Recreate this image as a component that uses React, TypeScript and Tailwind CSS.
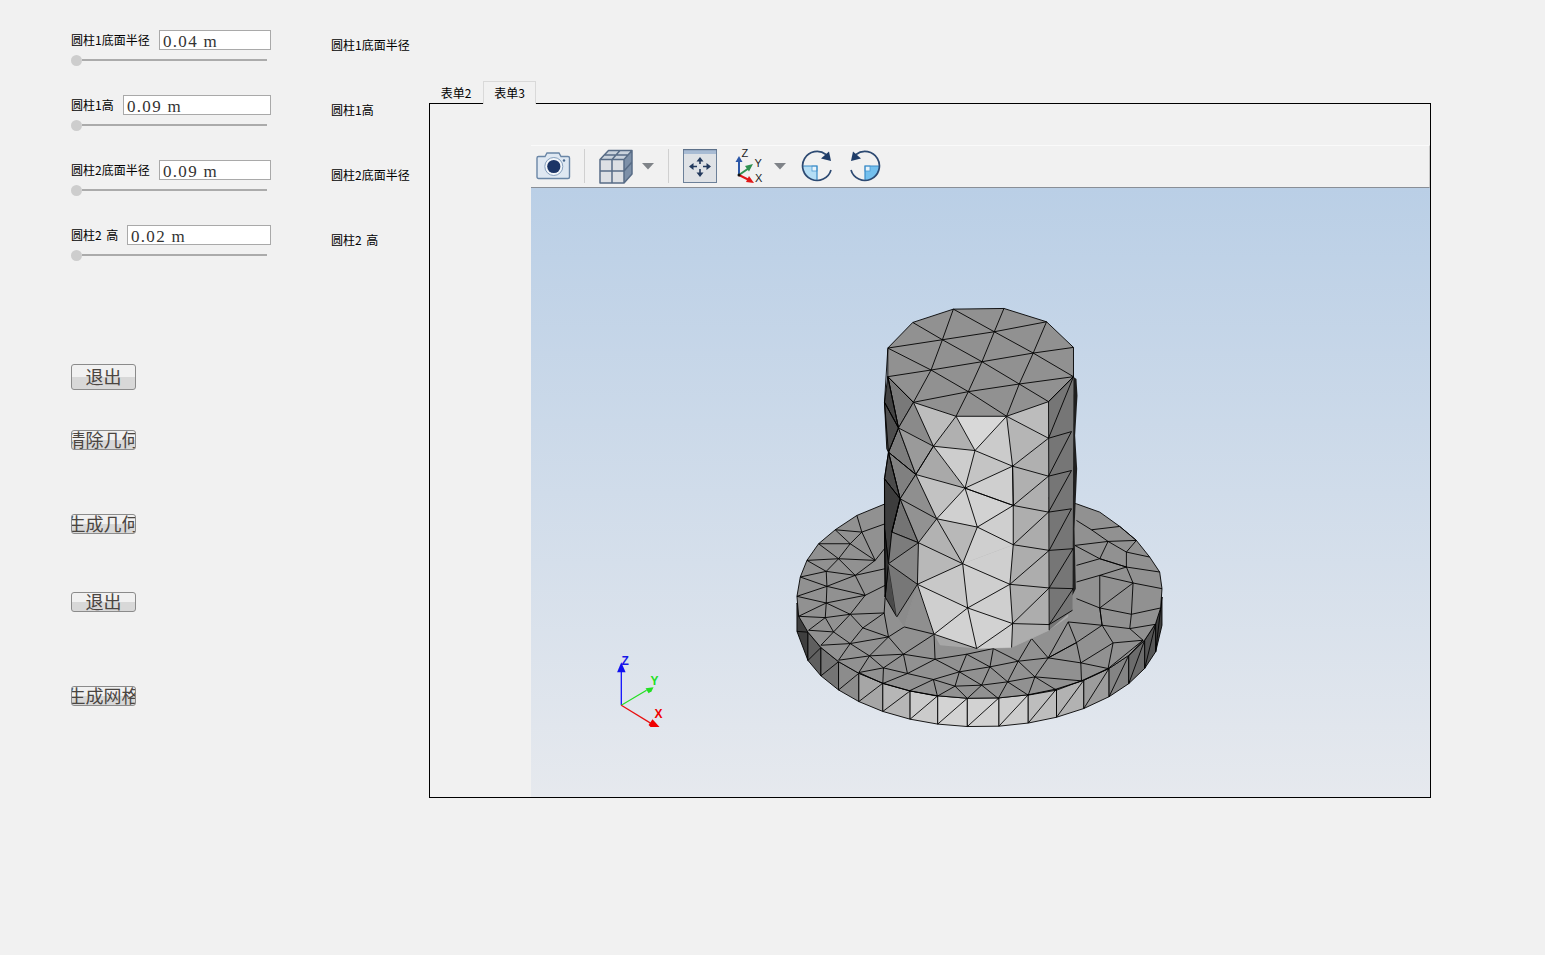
import React from 'react';

type Tri = [string, string];

const PARAMS = [
  { label: '圆柱1底面半径', value: '0.04 m', inputWidth: 'w-[112px]' },
  { label: '圆柱1高', value: '0.09 m', inputWidth: 'w-[148px]' },
  { label: '圆柱2底面半径', value: '0.09 m', inputWidth: 'w-[112px]' },
  { label: '圆柱2 高', value: '0.02 m', inputWidth: 'w-[144px]' },
];

// base disc, zoom coordinates (page = 780 + x/3, 510 + y/3)
const CX = 598;
const RX = 549;
const CY = 260;
const RY = 305;
const BAND = 85;

const rimY = (x: number) => CY + RY * Math.sqrt(Math.max(0, 1 - ((x - CX) / RX) ** 2));

const RIM_X = [50, 83, 122, 175, 236, 308, 390, 473, 562, 657, 745, 830, 912, 988, 1047, 1095, 1128, 1147];
const RIM_FILL = ['#3f3f3f', '#5f5f5f', '#747474', '#8c8c8c', '#a6a6a6', '#b6b6b6', '#cbcbcb', '#d3d3d3', '#d2d2d2', '#cdcdcd', '#bdbdbd', '#b2b2b2', '#9c9c9c', '#848484', '#6c6c6c', '#565656', '#3f3f3f'];

const DISC_UPPER = '50,258 60,200 80,150 115,100 165,58 230,15 315,-20 500,-60 700,-60 890,-20 960,5 1020,48 1070,90 1110,140 1140,185 1147,235 1143,293';
const DISC_LOWER = RIM_X.slice(1, -1).reverse().map((x) => `${x},${rimY(x)}`).join(' ');

const DISC_LINES = [
  '165,58 245,65 315,40', '230,15 245,65 285,150', '115,100 210,100 245,65', '165,58 210,100',
  '115,100 175,145 210,100 285,150', '80,150 175,145 285,150 325,100', '80,150 138,183 175,145 225,195 285,150',
  '60,200 138,183 225,195 315,175', '60,200 140,228 138,183', '140,228 225,195 255,255 315,225',
  '50,258 140,228 255,255', '50,258 138,278 140,228', '138,278 255,255 210,312 138,278', '55,318 138,278 135,322',
  '55,318 135,322 210,312 312,308', '85,360 135,322 160,365 210,312', '85,360 160,365 210,400 248,353 210,312',
  '248,353 312,308 325,380 372,350', '248,353 325,380 210,400', '122,405 160,365', '122,405 210,400 268,437 325,380 370,432 462,372',
  '175,450 210,400', '175,450 268,437 370,432 465,447 560,432 630,470', '236,487 268,437 310,473 370,432 382,490 465,447 538,485 560,432',
  '236,487 310,473 382,490 460,508 538,485 630,470 715,453 805,443 890,397 865,335', '308,520 310,473', '308,520 382,490',
  '236,487 308,520 388,542 460,508 525,528 538,485', '890,397 805,443 903,458 890,397 967,345 1000,398 903,458 985,475 1000,398 1090,390 1050,355 967,345',
  '1090,390 985,475', '1090,390 1047,437', '865,335 967,345 960,293 890,265', '960,293 1055,312 1050,355', '1050,355 1128,342', '1055,312 1143,293',
  '1055,312 1060,218 1147,235', '960,293 1060,218 960,195 890,215', '960,293 960,195', '960,145 1040,170 1060,218',
  '960,195 1040,170 960,145', '960,145 985,93 1040,125 1040,170 1140,185', '885,105 960,145 890,165', '885,105 985,93 935,58 890,30',
  '1040,125 1110,140', '985,93 1070,90 1020,48 935,58', '1040,125 1070,90', '960,293 967,345', '560,432 640,415 630,470',
  '640,415 715,453 755,385 805,443 865,335', '630,470 683,515 715,453 765,500 805,443', '903,458 905,512 765,500 683,515 605,525 630,470',
  '538,485 605,525 525,528 562,565', '605,525 655,565 683,515', '605,525 562,565', '525,528 472,558 460,508', '388,542 472,558',
  '765,500 745,555 683,515', '745,555 830,540 765,500', '830,540 905,512 985,475', '465,447 462,372', '312,308 315,262',
];

// cylinder, zoom coordinates (page = 780 + x/3, 295 + y/3)
const BODY_TRIS: Tri[] = [
  ['#bdbdbd', '400,320 528,362 460,452'], ['#b0b0b0', '528,362 585,465 460,452'], ['#d8d8d8', '528,362 680,362 585,465'],
  ['#cbcbcb', '680,362 698,512 585,465'], ['#b5b5b5', '680,362 806,428 698,512'], ['#bcbcbc', '680,362 806,318 806,428'],
  ['#8a8a8a', '400,320 460,452 355,397'], ['#9a9a9a', '460,452 407,537 355,397'], ['#a9a9a9', '460,452 555,578 407,537'],
  ['#cdcdcd', '460,452 585,465 555,578'], ['#c4c4c4', '585,465 698,512 555,578'], ['#cfcfcf', '698,512 700,630 555,578'],
  ['#b0b0b0', '698,512 806,542 700,630'], ['#b0b0b0', '698,512 806,428 806,542'], ['#c2c2c2', '407,537 555,578 470,670'],
  ['#d0d0d0', '555,578 592,695 470,670'], ['#d2d2d2', '555,578 700,630 592,695'], ['#cfcfcf', '700,630 700,748 592,695'],
  ['#afafaf', '700,630 806,542 806,650'], ['#aeaeae', '700,630 806,650 700,748'], ['#acacac', '700,748 806,650 808,765'],
  ['#8f8f8f', '360,610 407,537 470,670'], ['#929292', '360,610 470,670 415,742'], ['#b8b8b8', '470,670 592,695 548,805'],
  ['#b2b2b2', '470,670 548,805 415,742'], ['#b8b8b8', '415,742 548,805 412,867'], ['#cfcfcf', '592,695 700,748 548,805'],
  ['#cfcfcf', '700,748 690,867 548,805'], ['#adadad', '700,748 808,765 690,867'], ['#adadad', '690,867 808,765 808,878'],
  ['#cfcfcf', '548,805 690,867 563,938'], ['#c8c8c8', '548,805 563,938 412,867'], ['#cfcfcf', '690,867 698,985 563,938'],
  ['#adadad', '690,867 808,878 698,985'], ['#adadad', '698,985 808,878 808,988'], ['#7c7c7c', '335,710 415,742 325,805'],
  ['#888888', '415,742 412,867 325,805'], ['#777777', '325,805 412,867 350,965'], ['#8f8f8f', '412,867 462,1017 372,995'],
  ['#8b8b8b', '412,867 372,995 350,965'], ['#cfcfcf', '412,867 563,938 462,1017'], ['#d2d2d2', '563,938 590,1060 462,1017'],
  ['#d2d2d2', '563,938 698,985 590,1060'], ['#cfcfcf', '698,985 695,1057 590,1060'], ['#adadad', '698,985 808,988 808,1005 695,1057'],
];

const LEFT_TRIS: Tri[] = [
  ['#797979', '323,243 400,320 355,397'], ['#424242', '323,243 355,397 313,320'], ['#7d7d7d', '355,397 407,537 325,470'],
  ['#4e4e4e', '313,320 355,397 325,470 320,460'], ['#808080', '325,470 407,537 360,610'], ['#4a4a4a', '325,470 360,610 313,550'],
  ['#747474', '360,610 415,742 335,710'], ['#3d3d3d', '313,550 360,610 335,710 325,805 313,700'], ['#4a4a4a', '325,805 350,965 315,905'],
  ['#333333', '313,700 325,805 315,905'],
];

const BODY_LINES = [
  '400,320 460,452 585,465 698,512 806,542', '528,362 460,452 407,537 555,578 700,630 806,650', '528,362 585,465 555,578 470,670 592,695 700,748 808,765',
  '680,362 585,465', '680,362 698,512 700,630 700,748 690,867 698,985', '680,362 806,428 698,512 555,578', '400,320 355,397 407,537 460,452 555,578',
  '355,397 460,452', '407,537 470,670 548,805 563,938 590,1060', '698,512 700,630 555,578 592,695 548,805 690,867 563,938 698,985 590,1060',
  '700,630 806,542', '700,748 806,650', '690,867 808,765', '690,867 808,878', '698,985 808,878', '698,985 808,988', '592,695 700,630',
  '470,670 415,742 548,805 412,867 563,938 462,1017 590,1060', '415,742 412,867 462,1017', '360,610 407,537', '360,610 470,670', '360,610 415,742', '335,710 360,610',
  '335,710 415,742 325,805 412,867 350,965', '372,995 462,1017', '698,985 695,1057',
  '323,243 355,397 325,470 407,537', '325,470 360,610', '313,550 360,610 335,710 325,805', '313,320 355,397', '323,243 400,320',
];

const RIGHT_LINES = [
  '806,318 881,243', '881,243 806,428 875,408 806,542 875,525 806,650 875,640 808,765 880,760 808,878 880,880 808,988 878,945',
  '806,318 808,1005',
];

const TOP_LINES = [
  '323,157 487,132 643,108 800,78', '323,243 453,223 606,198 760,172 881,155', '400,320 565,288 718,265 881,243',
  '528,362 565,288 606,198 643,108 672,38', '400,320 453,223 487,132 520,40', '680,362 718,265 760,172 800,78',
  '398,80 487,132 606,198 718,265 806,318', '520,40 643,108 760,172 881,243', '323,157 453,223 565,288 680,362', '323,243 400,320',
];

function Mesh() {
  return (
    <svg viewBox="531 187 899 610" className="h-full w-full">
      {/* triad */}
      <g>
        <line x1="620.7" y1="705" x2="620.7" y2="668" stroke="#0000ff" strokeWidth="1.2" />
        <polygon points="620.7,662 616.5,672 625,672" fill="#1010f0" />
        <line x1="620.7" y1="705" x2="646" y2="690" stroke="#22e022" strokeWidth="1.2" />
        <polygon points="653,687 645,688 648,693 651,691" fill="#22e022" />
        <line x1="620.7" y1="705" x2="650" y2="723" stroke="#e81010" strokeWidth="1.2" />
        <polygon points="659,727 652,719 648,725 650,727" fill="#f00000" />
        <text x="621" y="665" fontFamily="'Liberation Sans', sans-serif" fontSize="12" fontWeight="700" fill="#1818e8">Z</text>
        <text x="650" y="685" fontFamily="'Liberation Sans', sans-serif" fontSize="12" fontWeight="700" fill="#22e022">Y</text>
        <text x="654" y="718" fontFamily="'Liberation Sans', sans-serif" fontSize="12" fontWeight="700" fill="#f00000">X</text>
      </g>

      {/* base disc */}
      <g transform="translate(780 510) scale(0.3333)" stroke="#000" strokeWidth="2.7" strokeLinejoin="round">
        {RIM_FILL.map((fill, i) => {
          const a = RIM_X[i];
          const b = RIM_X[i + 1];
          const ya = rimY(a);
          const yb = rimY(b);
          return (
            <g key={a}>
              <polygon points={`${a},${ya} ${b},${yb} ${b},${yb + BAND} ${a},${ya + BAND}`} fill={fill} />
              <line x1={a} y1={ya + BAND} x2={b} y2={yb} />
            </g>
          );
        })}
        <polygon points={`${DISC_UPPER} ${DISC_LOWER} 55,318`} fill="#919191" />
        {DISC_LINES.map((pts) => (
          <polyline key={pts} points={pts} fill="none" />
        ))}
        <polygon points="350,320 372,350 462,372 480,405 590,415 695,412 755,385 808,360 865,320 865,200 350,200" fill="#a7a7a7" stroke="none" />
      </g>

      {/* cylinder */}
      <g transform="translate(780 295) scale(0.3333)" stroke="#000" strokeWidth="2.7" strokeLinejoin="round">
        <polygon points="876,240 890,250 893,300 886,420 892,520 884,700 888,880 878,900 870,900" fill="#1f1f1f" stroke="none" />
        <polygon points="806,318 881,243 878,945 808,1005" fill="#767676" stroke="none" />
        {LEFT_TRIS.map(([fill, pts]) => (
          <polygon key={pts} points={pts} fill={fill} />
        ))}
        {BODY_TRIS.map(([fill, pts]) => (
          <polygon key={pts} points={pts} fill={fill} stroke={fill} strokeWidth="1" />
        ))}
        {BODY_LINES.map((pts) => (
          <polyline key={pts} points={pts} fill="none" />
        ))}
        <polygon points="323,157 398,80 520,40 672,38 800,78 881,155 881,243 806,318 680,362 528,362 400,320 323,243" fill="#919191" />
        {TOP_LINES.map((pts) => (
          <polyline key={pts} points={pts} fill="none" />
        ))}
        {RIGHT_LINES.map((pts) => (
          <polyline key={pts} points={pts} fill="none" />
        ))}
        <polyline points="323,160 313,320 325,470 313,550 315,905" fill="none" />
      </g>
    </svg>
  );
}

const Caret = () => (
  <svg width="12" height="8" viewBox="0 0 12 8" className="shrink-0">
    <polygon points="0,1 12,1 6,7.5" fill="#7f8388" />
  </svg>
);

const Sep = () => <div className="h-[34px] w-px shrink-0 bg-[#d0d0d0]" />;

const CameraIcon = () => (
  <svg width="36" height="30" viewBox="0 0 36 30" className="shrink-0">
    <path d="M2.5 5.5h6.5l2-3.5h12l2 3.5h7a1.5 1.5 0 0 1 1.5 1.5v19a1.5 1.5 0 0 1-1.5 1.5h-29.5a1.5 1.5 0 0 1-1.5-1.5V7a1.5 1.5 0 0 1 1.5-1.5z" fill="#dfe8f2" stroke="#6a86a6" strokeWidth="1.4" />
    <circle cx="17.8" cy="15.5" r="9" fill="#f2f6fa" stroke="#86a0be" strokeWidth="1" />
    <circle cx="17.8" cy="15.5" r="6.6" fill="#1c3566" />
    <circle cx="28" cy="9.5" r="1.2" fill="#47678c" />
  </svg>
);

const CubeIcon = () => (
  <svg width="34" height="36" viewBox="0 0 34 36" className="shrink-0">
    <polygon points="1,11.5 9.5,2.5 33,2.5 25,11.5" fill="#c9d2dc" />
    <polygon points="25,11.5 33,2.5 33,26 25,35" fill="#7d90a8" />
    <rect x="1" y="11.5" width="24" height="23.5" fill="#dde0e4" />
    <path d="M1 11.5 9.5 2.5H33V26L25 35H1ZM1 11.5H25L33 2.5M25 11.5V35M13 11.5V35M1 23H25M13 11.5 21 2.5M5 7H29M25 23 33 14" fill="none" stroke="#586c86" strokeWidth="1.5" strokeLinejoin="round" />
  </svg>
);

const PanIcon = () => (
  <svg width="34" height="34" viewBox="0 0 34 34" className="shrink-0">
    <rect x="0.5" y="0.5" width="33" height="33" fill="#dfe2e6" stroke="#6c8099" strokeWidth="1" />
    <rect x="1" y="1" width="32" height="4" fill="#a9bcd4" />
    <rect x="0" y="0" width="34" height="1.2" fill="#5d718a" />
    <path d="M17 11v4M17 20v4M9 17.5h5M20 17.5h5" stroke="#23395d" strokeWidth="1.6" />
    <path d="M17 8l-3.5 4.5h7zM17 28l-3.5-4.5h7zM6 17.5l4.5-3.5v7zM28 17.5l-4.5-3.5v7z" fill="#23395d" />
  </svg>
);

const AxesIcon = () => (
  <svg width="30" height="36" viewBox="0 0 30 36" className="shrink-0">
    <path d="M4 27V12" stroke="#2c57a8" strokeWidth="2" />
    <polygon points="4,8 0.5,14 7.5,14" fill="#2c57a8" />
    <path d="M4 27 14 20" stroke="#2f9150" strokeWidth="2" />
    <polygon points="18,16 10,18 14,23.5" fill="#2f9150" />
    <path d="M4 27 14 32" stroke="#e01818" strokeWidth="2" />
    <polygon points="19,35 11,34 14,28" fill="#e01818" />
    <circle cx="4" cy="27" r="1.5" fill="#111" />
    <text x="6.5" y="9" fontFamily="'Liberation Sans', sans-serif" fontSize="11" fill="#222">Z</text>
    <text x="19.5" y="19" fontFamily="'Liberation Sans', sans-serif" fontSize="11" fill="#222">Y</text>
    <text x="20" y="34" fontFamily="'Liberation Sans', sans-serif" fontSize="11" fill="#222">X</text>
  </svg>
);

const RotateCw = () => (
  <svg width="32" height="34" viewBox="0 0 32 34" className="shrink-0">
    <path d="M16 17H1.5A14.5 14.5 0 0 0 16 31.5z" fill="#b5def5" />
    <rect x="11" y="17" width="5" height="5" fill="#e6f3fb" stroke="#4f9ad0" strokeWidth="0.8" />
    <path d="M1.5 17H16V31.5" fill="none" stroke="#3a8cc8" strokeWidth="1.2" />
    <path d="M30 21A14.5 14.5 0 1 1 25 5.5" fill="none" stroke="#2d4a72" strokeWidth="1.7" />
    <polygon points="30,12 20,9.5 28,2.5" fill="#1f3d68" />
  </svg>
);

const RotateCcw = () => (
  <svg width="32" height="34" viewBox="0 0 32 34" className="shrink-0">
    <path d="M16 17H30.5A14.5 14.5 0 0 1 16 31.5z" fill="#74c0ee" />
    <rect x="16" y="17" width="5" height="5" fill="#e6f3fb" stroke="#4f9ad0" strokeWidth="0.8" />
    <path d="M30.5 17H16V31.5" fill="none" stroke="#3a8cc8" strokeWidth="1.2" />
    <path d="M2 21A14.5 14.5 0 1 0 7 5.5" fill="none" stroke="#2d4a72" strokeWidth="1.7" />
    <polygon points="2,12 12,9.5 4,2.5" fill="#1f3d68" />
  </svg>
);

function Toolbar() {
  return (
    <div className="flex h-[43px] items-center border-t border-t-[#fafafa] border-r border-r-[#c8c8c8] border-b border-b-[#8a8f96] bg-[#f1f1f1] pb-[2px] pl-[5px]">
      <CameraIcon />
      <div className="ml-[12px]"><Sep /></div>
      <div className="ml-[14px]"><CubeIcon /></div>
      <div className="ml-[9px]"><Caret /></div>
      <div className="ml-[14px]"><Sep /></div>
      <div className="ml-[14px]"><PanIcon /></div>
      <div className="ml-[18px]"><AxesIcon /></div>
      <div className="ml-[9px]"><Caret /></div>
      <div className="ml-[15px]"><RotateCw /></div>
      <div className="ml-[16px]"><RotateCcw /></div>
    </div>
  );
}

function PushButton({ text, className }: { text: string; className: string }) {
  return (
    <button
      type="button"
      className={`flex w-[65px] items-center justify-center overflow-hidden whitespace-nowrap rounded-[3px] border border-[#8b8b8b] bg-[linear-gradient(#f1f1f1_50%,#d8d8d8_50%)] pb-[2px] text-[18px] leading-none text-[#4a4541] ${className}`}
    >
      {text}
    </button>
  );
}

export default function App() {
  return (
    <div className="flex h-[955px] w-[1545px] overflow-hidden bg-[#f1f1f1] pt-[30px] pl-[71px] font-['Liberation_Sans','Noto_Sans_CJK_SC',sans-serif] text-[12px] text-black">
      {/* sliders and buttons */}
      <div className="flex w-[200px] shrink-0 flex-col font-['Noto_Sans_CJK_SC',sans-serif]">
        {PARAMS.map((p) => (
          <div key={p.label} className="h-[65px]">
            <div className="flex h-[20px] items-center justify-between">
              <span className="whitespace-nowrap [word-spacing:2px]">{p.label}</span>
              <input
                readOnly
                value={p.value}
                className={`h-[20px] border border-[#a9a9a9] bg-white px-[3px] pt-[3px] font-['Liberation_Serif',serif] text-[17px] leading-none tracking-[1.3px] text-[#333] outline-none ${p.inputWidth}`}
              />
            </div>
            <div className="mt-[5px] flex h-[10px] items-center">
              <div className="h-[11px] w-[11px] shrink-0 rounded-full bg-[#cdcdcd]" />
              <div className="h-[2px] w-[185px] bg-[#ababab]" />
            </div>
          </div>
        ))}
        <PushButton text="退出" className="mt-[74px] h-[26px]" />
        <PushButton text="清除几何" className="mt-[40px] h-[20px]" />
        <PushButton text="生成几何" className="mt-[64px] h-[20px]" />
        <PushButton text="退出" className="mt-[58px] h-[20px]" />
        <PushButton text="生成网格" className="mt-[74px] h-[20px]" />
      </div>

      {/* value captions */}
      <div className="ml-[60px] flex w-[98px] shrink-0 flex-col pt-[5px] font-['Noto_Sans_CJK_SC',sans-serif]">
        {PARAMS.map((p) => (
          <div key={p.label} className="flex h-[65px] items-start">
            <span className="h-[20px] whitespace-nowrap leading-[20px] [word-spacing:2px]">{p.label}</span>
          </div>
        ))}
      </div>

      {/* tab widget */}
      <div className="mt-[51px] w-[1002px] shrink-0 font-['Noto_Sans_CJK_SC',sans-serif]">
        <div className="relative z-10 -mb-px flex h-[23px] items-end">
          <div className="flex h-[22px] w-[54px] items-center justify-center">表单2</div>
          <div className="flex h-[23px] w-[53px] items-center justify-center border border-b-0 border-[#d9d9d9] bg-[#f1f1f1]">表单3</div>
        </div>
        <div className="h-[695px] border border-black pt-[41px] pl-[101px]">
          <Toolbar />
          <div className="h-[609px] bg-[linear-gradient(#bacfe6,#e6e9ee)]">
            <Mesh />
          </div>
        </div>
      </div>
    </div>
  );
}
